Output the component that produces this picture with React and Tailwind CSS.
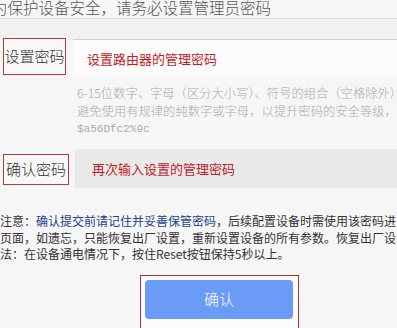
import React from 'react';

const cjk = { fontFamily: '"Microsoft YaHei", "Noto Sans CJK SC", "Noto Sans", sans-serif' };

export default function App() {
  return (
    <div className="w-[397px] h-[328px] overflow-hidden bg-[#f6f6f6]" style={cjk}>
      {/* intro line, cut off on the left */}
      <div className="h-[22px] overflow-visible">
        <p className="-mt-[4px] -ml-[8px] text-[15.5px] leading-[22px] font-light text-[#555] whitespace-nowrap">
          为保护设备安全，请务必设置管理员密码
        </p>
      </div>
      <div className="h-[21px] border-t border-[#dcdcdc] bg-[#f1f1f1]" />

      {/* password row */}
      <div className="flex items-start">
        <div className="ml-[3px] -mt-[1px] w-[63px] h-[37px] shrink-0 border border-[#b23b3b] bg-[#f8f8f8] flex items-center justify-center text-[15px] font-light text-[#333]">
          设置密码
        </div>
        <div className="ml-[7px] flex-1 h-[38px] border-t border-[#cfcfcf] bg-[#fbfbfb] flex items-center pl-[14px] text-[13px] text-[#c11b1f] whitespace-nowrap">
          设置路由器的管理密码
        </div>
      </div>

      {/* hint */}
      <div className="h-[72px] pt-[7px] pl-[77px] text-[12.3px] leading-[18px] font-light text-[#aaa] whitespace-nowrap overflow-hidden">
        <div>6-15位数字、字母（区分大小写）、符号的组合（空格除外）</div>
        <div>避免使用有规律的纯数字或字母，以提升密码的安全等级，如</div>
        <div className="text-[11px]" style={{ fontFamily: '"Liberation Mono", "Courier New", monospace' }}>$a56Dfc2%9c</div>
      </div>

      {/* confirm row */}
      <div className="flex items-center h-[39px]">
        <div className="ml-[3px] mt-[1px] w-[66px] h-[31px] shrink-0 border border-[#b23b3b] bg-[#f8f8f8] flex items-center justify-center text-[15px] font-light text-[#333]">
          确认密码
        </div>
        <div className="ml-[6px] flex-1 h-[39px] bg-[#e9e9e9] flex items-center pl-[17px] text-[13px] text-[#c11b1f] whitespace-nowrap">
          再次输入设置的管理密码
        </div>
      </div>

      {/* notice */}
      <div className="mt-[25px] text-[12px] leading-[16.5px] text-[#333] whitespace-nowrap overflow-hidden">
        <div>
          注意：<span className="text-[#1b3f91]">确认提交前请记住并妥善保管密码</span>，后续配置设备时需使用该密码进
        </div>
        <div>页面，如遗忘，只能恢复出厂设置，重新设置设备的所有参数。恢复出厂设</div>
        <div>法：在设备通电情况下，按住Reset按钮保持5秒以上。</div>
      </div>

      {/* submit */}
      <div className="mt-[12px] ml-[140px] w-[159px] h-[60px] border border-[#a83232] bg-[#fbfbfb] pt-[4px] pl-[4px]">
        <button className="w-[148px] h-[39px] rounded-[4px] bg-[#6a9bf6] text-white text-[15px] font-light">确认</button>
      </div>
    </div>
  );
}
